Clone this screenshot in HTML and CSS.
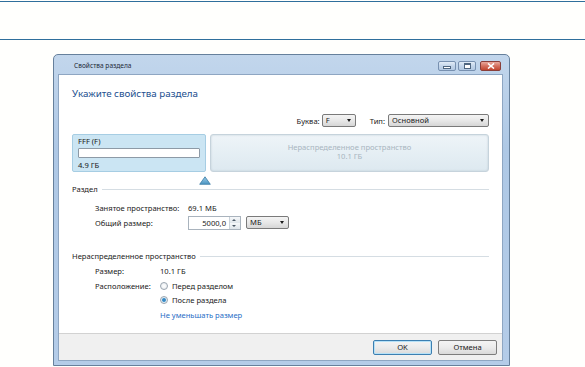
FILE: index.html
```html
<!DOCTYPE html>
<html lang="ru">
<head>
    <meta charset="UTF-8">
    <meta name="viewport" content="width=device-width, initial-scale=1.0">
    <link rel="stylesheet" href="styles.css">
    <title>Свойства раздела</title>
</head>
<body>
    <div class="page-band"></div>

    <div class="window">
        <div class="titlebar">
            <span class="title">Свойства раздела</span>
            <div class="caption-buttons">
                <span class="cap-btn cap-min"><i></i></span>
                <span class="cap-btn cap-max"><i></i></span>
                <span class="cap-btn cap-close">
                    <svg width="8" height="6" viewBox="0 0 8 6"><path d="M1 0.5 L7 5.5 M7 0.5 L1 5.5" stroke="#fff" stroke-width="1.6"/></svg>
                </span>
            </div>
        </div>

        <div class="client">
            <div class="content">
                <h1>Укажите свойства раздела</h1>

                <div class="type-row">
                    <label>Буква:</label>
                    <div class="select select-letter">F<span class="arrow"></span></div>
                    <label class="type-label">Тип:</label>
                    <div class="select select-type">Основной<span class="arrow"></span></div>
                </div>

                <div class="disk-map">
                    <div class="part part-used">
                        <div>FFF (F)</div>
                        <div class="usage"></div>
                        <div>4.9 ГБ</div>
                    </div>
                    <div class="part part-free">
                        <div>Нераспределенное пространство</div>
                        <div>10.1 ГБ</div>
                    </div>
                </div>

                <div class="slider">
                    <svg width="12" height="9" viewBox="0 0 12 9">
                        <defs>
                            <linearGradient id="tri" x1="0" y1="0" x2="0" y2="1">
                                <stop offset="0" stop-color="#9ccde8"/>
                                <stop offset="1" stop-color="#4a94c2"/>
                            </linearGradient>
                        </defs>
                        <path d="M6 0.8 L11.3 8.3 L0.7 8.3 Z" fill="url(#tri)" stroke="#3b7ca6" stroke-width="0.8" stroke-linejoin="round"/>
                    </svg>
                </div>

                <div class="group-title"><span>Раздел</span><hr></div>
                <div class="rows rows-part">
                    <div class="row">
                        <span class="key">Занятое пространство:</span>
                        <span>69.1 МБ</span>
                    </div>
                    <div class="row">
                        <span class="key">Общий размер:</span>
                        <div class="number">
                            <span class="number-value">5000,0</span>
                            <span class="spin"><b class="up"></b><b class="down"></b></span>
                        </div>
                        <div class="select select-unit">МБ<span class="arrow"></span></div>
                    </div>
                </div>

                <div class="group-title group-free"><span>Нераспределенное пространство</span><hr></div>
                <div class="rows rows-free">
                    <div class="row">
                        <span class="key">Размер:</span>
                        <span>10.1 ГБ</span>
                    </div>
                    <div class="row">
                        <span class="key">Расположение:</span>
                        <span class="radio"></span>
                        <span>Перед разделом</span>
                    </div>
                    <div class="row">
                        <span class="key"></span>
                        <span class="radio checked"></span>
                        <span>После раздела</span>
                    </div>
                    <div class="row">
                        <span class="key"></span>
                        <a class="link" href="#">Не уменьшать размер</a>
                    </div>
                </div>
            </div>

            <div class="footer">
                <button class="btn btn-default">OK</button>
                <button class="btn">Отмена</button>
            </div>
        </div>
    </div>
</body>
</html>
```

FILE: styles.css
```css
body {
    margin: 0;
    background-color: #fffffd;
    font-family: 'Noto Sans', 'Open Sans', sans-serif;
    font-size: 7.6px;
    color: #1a1a1a;
}

.page-band {
    height: 37px;
    margin-top: 1px;
    border-top: 1px solid #2f6f9c;
    border-bottom: 1px solid #2f6f9c;
}

.window {
    width: 445px;
    height: 306px;
    margin: 14px 0 0 53px;
    border: 1px solid #66809c;
    border-radius: 5px 5px 0 0;
    background: linear-gradient(to bottom, #c2d6ec, #aec8e5 30%, #b4cce8);
    display: flex;
    flex-direction: column;
    padding: 0 6px 4px 4px;
}

.titlebar {
    height: 19px;
    display: flex;
    align-items: center;
    justify-content: space-between;
}

.title {
    padding-left: 16px;
    padding-top: 2px;
    font-size: 6.6px;
    color: #1e2a38;
}

.caption-buttons {
    display: flex;
    gap: 2px;
    padding-top: 2px;
    padding-right: 2px;
}

.cap-btn {
    width: 16px;
    height: 8px;
    border: 1px solid #7790b0;
    border-radius: 2px;
    background: linear-gradient(to bottom, #e2ecf7, #c3d5ea 50%, #b3c9e3);
    display: flex;
    align-items: center;
    justify-content: center;
}

.cap-min i {
    width: 6px;
    height: 1px;
    margin-top: 3px;
    border: 1px solid #4f6680;
    background: #fff;
}

.cap-max i {
    width: 5px;
    height: 3px;
    border: 1px solid #4f6680;
    border-top-width: 2px;
    background: #fff;
}

.cap-close {
    width: 19px;
    margin-left: 2px;
    border-color: #8a3f3a;
    background: linear-gradient(to bottom, #eaa99c, #d4705e 50%, #c2462f);
}

.client {
    flex: 1;
    background: #fff;
    border: 1px solid #8ea6c2;
    display: flex;
    flex-direction: column;
}

.content {
    flex: 1;
    padding: 0 13px 0 13px;
}

h1 {
    margin: 12px 0 0 0;
    font-size: 9.8px;
    font-weight: normal;
    line-height: 14px;
    color: #1d4f8f;
}

.type-row {
    display: flex;
    justify-content: flex-end;
    align-items: center;
    margin-top: 13px;
    height: 13px;
}

.type-row label {
    margin-right: 2px;
}

.type-row .type-label {
    margin-left: 14px;
    margin-right: 3px;
}

.select {
    position: relative;
    height: 11px;
    border: 1px solid #7a7a7a;
    border-radius: 2px;
    background: linear-gradient(to bottom, #f4f4f4, #e8e8e8 50%, #d6d6d6);
    padding-left: 3px;
    line-height: 11px;
    box-sizing: content-box;
}

.select .arrow {
    position: absolute;
    right: 4px;
    top: 4px;
    border-left: 2.5px solid transparent;
    border-right: 2.5px solid transparent;
    border-top: 3px solid #1a1a1a;
}

.select-letter {
    width: 29px;
}

.select-type {
    width: 96px;
}

.disk-map {
    display: flex;
    gap: 4px;
    margin-top: 7px;
    height: 38px;
}

.part {
    border-radius: 2px;
    box-sizing: border-box;
}

.part-used {
    width: 134px;
    background: #cbe5f3;
    border: 1px solid #a6cde3;
    padding: 1px 5px 0 5px;
    line-height: 10px;
}

.usage {
    height: 8px;
    margin: 2px 0 2px 0;
    background: #fff;
    border: 1px solid #8d9aa6;
    border-radius: 1px;
}

.part-free {
    flex: 1;
    border: 1px solid #c6d3dc;
    border-radius: 3px;
    background: linear-gradient(to bottom, #eef4f8, #dde9f0);
    box-shadow: inset 0 0 2px #b9c8d2;
    color: #a8b5bf;
    text-align: center;
    padding-top: 8px;
    line-height: 9px;
}

.slider {
    height: 11px;
    padding-left: 127px;
    padding-top: 4px;
    box-sizing: border-box;
}

.group-title {
    display: flex;
    align-items: center;
    margin-top: 1px;
    height: 10px;
}

.group-title span {
    margin-right: 4px;
}

.group-title hr {
    flex: 1;
    margin: 0;
    border: none;
    border-top: 1px solid #d5dde3;
}

.rows .row {
    display: flex;
    align-items: center;
}

.rows-part {
    padding-left: 23px;
    padding-top: 6px;
}

.rows-part .row {
    height: 15px;
}

.rows-part .key {
    width: 93px;
}

.number {
    display: flex;
    height: 14px;
    width: 53px;
    border: 1px solid #a9b3bd;
    box-sizing: border-box;
}

.number-value {
    flex: 1;
    text-align: right;
    padding-right: 3px;
    line-height: 12px;
}

.spin {
    width: 10px;
    display: flex;
    flex-direction: column;
    border-left: 1px solid #c9d2da;
}

.spin b {
    flex: 1;
    position: relative;
    background: linear-gradient(to bottom, #f6f8fa, #dfe5ea);
}

.spin b::after {
    content: "";
    position: absolute;
    left: 2px;
    top: 2px;
    border-left: 2px solid transparent;
    border-right: 2px solid transparent;
}

.spin .up::after {
    border-bottom: 2px solid #4a5866;
}

.spin .down::after {
    border-top: 2px solid #4a5866;
}

.select-unit {
    width: 38px;
    margin-left: 5px;
}

.group-free {
    margin-top: 21px;
}

.rows-free {
    padding-left: 23px;
    padding-top: 3px;
}

.rows-free .row {
    height: 14.5px;
}

.rows-free .key {
    width: 65px;
}

.radio {
    width: 6px;
    height: 6px;
    margin-right: 4px;
    border: 1px solid #9aa5b0;
    border-radius: 50%;
    background: radial-gradient(circle, #fff, #e3e8ec);
}

.radio.checked {
    background: radial-gradient(circle, #2a7ab7 0, #4d9bd1 40%, #e5edf3 55%);
}

.link {
    color: #1f6ec6;
    text-decoration: none;
}

.footer {
    height: 26px;
    background: #f0f0f0;
    border-top: 1px solid #d2d2d2;
    display: flex;
    justify-content: flex-end;
    align-items: center;
    gap: 6px;
    padding-right: 5px;
}

.btn {
    width: 59px;
    height: 15px;
    padding: 0;
    font-family: inherit;
    font-size: 7.6px;
    color: #1a1a1a;
    border: 1px solid #7d7d7d;
    border-radius: 2px;
    background: linear-gradient(to bottom, #f4f4f4, #ebebeb 50%, #dadada);
}

.btn-default {
    border-color: #3c7fb1;
    box-shadow: inset 0 0 0 1px #b6e1f7;
}
```
